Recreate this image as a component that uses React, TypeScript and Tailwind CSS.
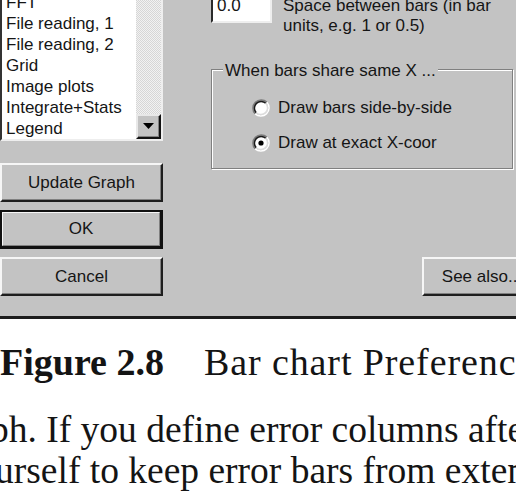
import React from "react";

function Radio({ checked }: { checked?: boolean }) {
  return (
    <svg width="18" height="18" viewBox="0 0 18 18" className="shrink-0">
      <circle cx="9" cy="9" r="7" fill="#ffffff" />
      <path d="M3.17 14.83 A8.25 8.25 0 0 1 14.83 3.17" fill="none" stroke="#7a7a7a" strokeWidth="1.5" />
      <path d="M14.83 3.17 A8.25 8.25 0 0 1 3.17 14.83" fill="none" stroke="#ffffff" strokeWidth="1.5" />
      <path d="M4.23 13.77 A6.75 6.75 0 0 1 13.77 4.23" fill="none" stroke="#1a1a1a" strokeWidth="1.5" />
      <path d="M13.77 4.23 A6.75 6.75 0 0 1 4.23 13.77" fill="none" stroke="#dcdcdc" strokeWidth="1.5" />
      {checked && <circle cx="9" cy="9" r="2.6" fill="#000000" />}
    </svg>
  );
}

function Btn({ children, className = "" }: { children: React.ReactNode; className?: string }) {
  return (
    <div
      className={
        "h-[39px] flex items-center justify-center border-t-2 border-l-2 border-r-2 border-b-2 border-t-[#f6f6f6] border-l-[#f6f6f6] border-r-[#1e1e1e] border-b-[#1e1e1e] shadow-[inset_-1px_-1px_0_#808080] " +
        className
      }
    >
      {children}
    </div>
  );
}

export default function App() {
  const items = [
    "FFT",
    "File reading, 1",
    "File reading, 2",
    "Grid",
    "Image plots",
    "Integrate+Stats",
    "Legend",
  ];
  return (
    <div className="w-[516px] h-[499px] overflow-hidden bg-white">
      <div className="h-[319px] bg-[#c3c3c3] border-b-[3px] border-b-[#1c1c1c] overflow-hidden flex font-['Liberation_Sans',Arial,sans-serif] text-[17px] leading-[20px] text-[#151515]">
        {/* left column */}
        <div className="w-[163px] shrink-0 flex flex-col">
          <div className="-mt-[10px] h-[151px] flex border-t-2 border-l-2 border-r-2 border-b-2 border-t-[#333333] border-l-[#333333] border-r-[#eeeeee] border-b-[#eeeeee]">
            <div className="w-[134px] bg-white pl-[4px] flex flex-col">
              {items.map((t) => (
                <div key={t} className="h-[21px] flex items-center whitespace-nowrap">
                  {t}
                </div>
              ))}
            </div>
            <div className="w-[25px] flex flex-col justify-end bg-[repeating-conic-gradient(#f2f2f2_0_25%,#d6d6d6_0_50%)] bg-[length:2px_2px]">
              <div className="h-[25px] bg-[#c3c3c3] flex items-center justify-center border-t-2 border-l-2 border-r-2 border-b-2 border-t-[#e8e8e8] border-l-[#e8e8e8] border-r-[#111111] border-b-[#111111] shadow-[inset_-1px_-1px_0_#808080]">
                <svg width="11" height="6" viewBox="0 0 11 6" className="-mt-[1px] -ml-[1px]">
                  <path d="M0 0 H11 L5.5 6 Z" fill="#000000" />
                </svg>
              </div>
            </div>
          </div>
          <Btn className="mt-[22px]">Update Graph</Btn>
          <div className="mt-[8px] h-[39px] border-2 border-[#111111] border-r-[3px] border-b-[3px]">
            <div className="h-full flex items-center justify-center border-t border-l border-t-[#f6f6f6] border-l-[#f6f6f6] border-r border-b border-r-[#808080] border-b-[#808080]">
              OK
            </div>
          </div>
          <Btn className="mt-[8px]">Cancel</Btn>
        </div>

        {/* right column */}
        <div className="ml-[48px] w-[331px] shrink-0 flex flex-col">
          <div className="-mt-[10px] flex items-start">
            <div className="w-[61px] h-[33px] shrink-0 bg-white pl-[4px] pt-[4px] border-t-2 border-l-2 border-r-2 border-b-2 border-t-[#2a2a2a] border-l-[#2a2a2a] border-r-[#eeeeee] border-b-[#eeeeee]">
              0.0
            </div>
            <div className="ml-[11px] mt-[6px] whitespace-nowrap">
              <div>Space between bars (in bar</div>
              <div>units, e.g. 1 or 0.5)</div>
            </div>
          </div>

          <div className="relative mt-[33px] w-[302px] h-[100px] border border-[#808080] shadow-[inset_1px_1px_0_#ffffff,1px_1px_0_#ffffff]">
            <div className="absolute left-[11px] -top-[9px] px-[2px] bg-[#c3c3c3] whitespace-nowrap">
              When bars share same X ...
            </div>
            <div className="pt-[28px] pl-[40px] flex flex-col gap-[15px]">
              <div className="h-[20px] flex items-center gap-[8px] whitespace-nowrap">
                <Radio />
                <span>Draw bars side-by-side</span>
              </div>
              <div className="h-[20px] flex items-center gap-[8px] whitespace-nowrap">
                <Radio checked />
                <span>Draw at exact X-coor</span>
              </div>
            </div>
          </div>

          <Btn className="mt-[88px] ml-[211px] w-[120px] whitespace-nowrap">See also...</Btn>
        </div>
      </div>

      <div className="pt-[21px] font-['Liberation_Serif','Times_New_Roman',serif] text-[#141414] overflow-hidden">
        <div className="text-[38px] leading-[44px] whitespace-nowrap">
          <span className="font-bold">Figure 2.8</span>
          <span className="ml-[40px] tracking-[0.9px]">Bar chart Preferences</span>
        </div>
        <div className="mt-[25px] text-[37.5px] leading-[41px] whitespace-nowrap">
          <div className="-ml-[10px]">ph. If you define error columns after</div>
          <div className="-ml-[5px]">urself to keep error bars from extending</div>
        </div>
      </div>
    </div>
  );
}
